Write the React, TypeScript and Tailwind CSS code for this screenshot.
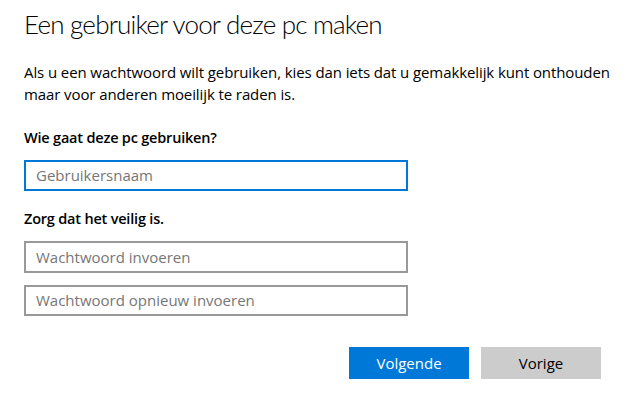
import React from "react";

export default function App() {
  return (
    <div className="w-[626px] h-[407px] bg-white text-black pl-[24px] pt-[7px]" style={{ fontFamily: '"Open Sans", "Noto Sans", sans-serif' }}>
      <h1 className="text-[26px] leading-[34px] font-light text-[#000] tracking-[-0.8px]" style={{ fontFamily: 'Lato, "Open Sans", sans-serif' }}>Een gebruiker voor deze pc maken</h1>
      <p className="mt-[20px] text-[15px] leading-[22px] w-[600px] tracking-[-0.1px]">
        Als u een wachtwoord wilt gebruiken, kies dan iets dat u gemakkelijk kunt onthouden maar voor anderen moeilijk te raden is.
      </p>
      <div className="mt-[23px] text-[14.5px] leading-[20px] font-semibold tracking-[-0.2px]">Wie gaat deze pc gebruiken?</div>
      <div className="mt-[12px] w-[384px] h-[31px] border-2 border-[#0078d7] flex items-center pl-[10px] text-[15px] text-[#767676]">Gebruikersnaam</div>
      <div className="mt-[18px] text-[14.5px] leading-[20px] font-semibold tracking-[-0.2px]">Zorg dat het veilig is.</div>
      <div className="mt-[12px] w-[384px] h-[32px] border-2 border-[#999999] flex items-center pl-[10px] text-[15px] text-[#767676]">Wachtwoord invoeren</div>
      <div className="mt-[12px] w-[384px] h-[31px] border-2 border-[#999999] flex items-center pl-[10px] text-[15px] text-[#767676]">Wachtwoord opnieuw invoeren</div>
      <div className="mt-[31px] flex gap-[12px] pl-[325px]">
        <div className="w-[120px] h-[32px] bg-[#0078d7] text-white text-[15px] flex items-center justify-center">Volgende</div>
        <div className="w-[120px] h-[32px] bg-[#cccccc] text-black text-[15px] flex items-center justify-center">Vorige</div>
      </div>
    </div>
  );
}
